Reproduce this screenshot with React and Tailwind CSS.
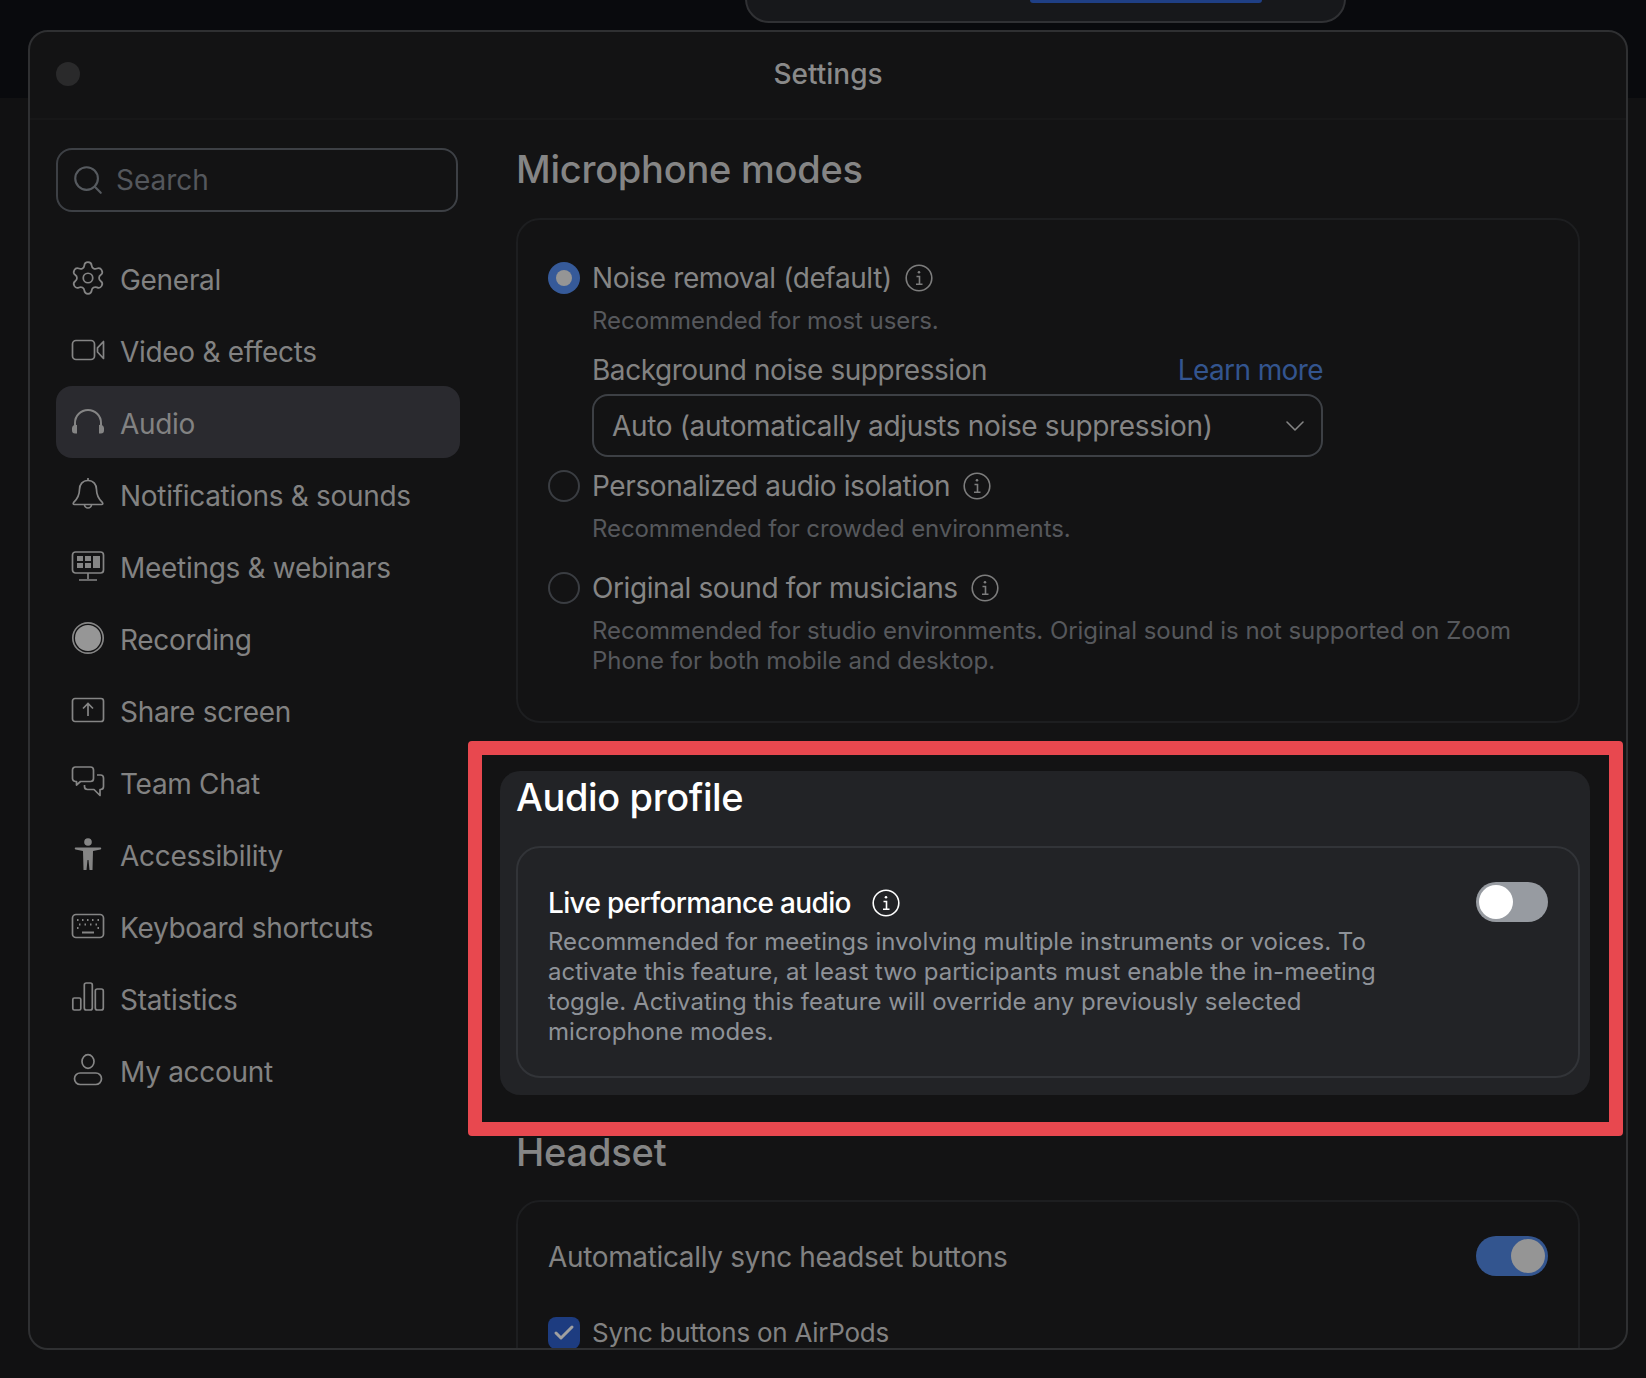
import { Check, ChevronDown, Search, Settings } from 'lucide-react'

const NAV_ICON = 'w-[34px] h-[34px] shrink-0 text-[#858585]'

const VideoIcon = () => (
  <svg viewBox="0 0 34 34" fill="none" stroke="currentColor" strokeWidth="1.7" className={NAV_ICON}>
    <rect x="1.5" y="7.5" width="22" height="19" rx="3.5" />
    <path d="M32.5 8.5v17l-6-6.5v-4.2z" strokeLinejoin="round" />
  </svg>
)

const HeadphonesIcon = () => (
  <svg viewBox="0 0 34 34" fill="none" stroke="currentColor" strokeWidth="2" className={NAV_ICON}>
    <path d="M4 23v-5a13 13 0 0 1 26 0v5" />
    <path d="M1 23a3.500 3.500 0 0 1 5-3v8.500H4a3 3 0 0 1-3-3zM33 23a3.500 3.500 0 0 0-5-3v8.500h2a3 3 0 0 0 3-3z" fill="currentColor" stroke="none" />
  </svg>
)

const BellIcon = () => (
  <svg viewBox="0 0 34 34" fill="none" stroke="currentColor" strokeWidth="1.7" className={NAV_ICON}>
    <path d="M17 3.500c-5.500 0-8.500 4-8.500 9 0 6-2.200 9.500-6 13.200-.6.700-.2 1.800.8 1.800h27.400c1 0 1.400-1.100.8-1.800-3.800-3.700-6-7.200-6-13.200 0-5-3-9-8.500-9z" strokeLinejoin="round" />
    <path d="M13.500 27.500a3.500 3.500 0 0 0 7 0M17 1v2.500" />
  </svg>
)

const MonitorIcon = () => (
  <svg viewBox="0 0 34 34" fill="none" stroke="currentColor" strokeWidth="1.7" className={NAV_ICON}>
    <rect x="1.500" y="3" width="31" height="21" rx="3" />
    <path d="M17 24v6M8 31h18" />
    <path d="M6 7h6v5H6zM14 7h6v5h-6zM6 14h6v5H6zM14 14h6v5h-6zM22 7h7v12h-7z" fill="currentColor" stroke="none" />
  </svg>
)

const RecordIcon = () => (
  <svg viewBox="0 0 34 34" fill="none" className={NAV_ICON}>
    <circle cx="17" cy="17" r="15.200" stroke="currentColor" strokeWidth="1.700" />
    <circle cx="17" cy="17" r="13" fill="#969696" />
  </svg>
)

const ShareIcon = () => (
  <svg viewBox="0 0 34 34" fill="none" stroke="currentColor" strokeWidth="1.700" className={NAV_ICON}>
    <rect x="1.500" y="5.500" width="31" height="23" rx="2.500" />
    <path d="M17 23v-12M12 15.500l5-5 5 5" />
  </svg>
)

const ChatIcon = () => (
  <svg viewBox="0 0 34 34" fill="none" stroke="currentColor" strokeWidth="1.700" strokeLinejoin="round" className={NAV_ICON}>
    <path d="M4.500 2h15a3 3 0 0 1 3 3v8.500a3 3 0 0 1-3 3H9.500l-4 3.500v-3.500h-1a3 3 0 0 1-3-3V5a3 3 0 0 1 3-3z" />
    <path d="M26 10h3.500a3 3 0 0 1 3 3v8.500a3 3 0 0 1-3 3H29v6l-6-6h-6.500a3 3 0 0 1-3-3V20" />
  </svg>
)

const AccessIcon = () => (
  <svg viewBox="0 0 34 34" fill="currentColor" className={NAV_ICON}>
    <circle cx="17" cy="5" r="3.800" />
    <path d="M4.500 10.500h25c.8 0 1.200 1.800 0 2l-7.500 1.500-.5 19h-3L17.500 23h-1l-1 10h-3L12 14l-7.500-1.500c-1.200-.3-.8-2 0-2z" />
  </svg>
)

const KeyboardIcon = () => (
  <svg viewBox="0 0 34 34" fill="none" stroke="currentColor" strokeWidth="1.700" className={NAV_ICON}>
    <rect x="1.500" y="5.500" width="31" height="23" rx="3.500" />
    <path d="M6 11h1.500M11 11h1.500M16 11h1.500M21 11h1.500M26.500 11H28M8 15.500h1.500M13.500 15.500H15M19 15.500h1.500M24.500 15.500H26M6 19h1.500M26.500 19H28" strokeWidth="2" />
    <path d="M11 23.500h12" strokeWidth="2" />
  </svg>
)

const StatsIcon = () => (
  <svg viewBox="0 0 34 34" fill="none" stroke="currentColor" strokeWidth="1.700" className={NAV_ICON}>
    <rect x="1.800" y="17" width="8" height="12" rx="1.500" />
    <rect x="13.300" y="2" width="8" height="27" rx="2" />
    <rect x="24.300" y="8" width="8" height="21" rx="2" />
  </svg>
)

const AccountIcon = () => (
  <svg viewBox="0 0 34 34" fill="none" stroke="currentColor" strokeWidth="1.700" className={NAV_ICON}>
    <ellipse cx="17" cy="8.500" rx="6" ry="6.800" />
    <rect x="3.500" y="20" width="27" height="11.500" rx="5.700" />
  </svg>
)

const GearIcon = () => <Settings strokeWidth={1.1} className="w-[38px] h-[38px] -m-[2px] shrink-0 text-[#858585]" />

const navItems = [
  { label: 'General', Icon: GearIcon },
  { label: 'Video & effects', Icon: VideoIcon },
  { label: 'Audio', Icon: HeadphonesIcon, active: true },
  { label: 'Notifications & sounds', Icon: BellIcon },
  { label: 'Meetings & webinars', Icon: MonitorIcon },
  { label: 'Recording', Icon: RecordIcon },
  { label: 'Share screen', Icon: ShareIcon },
  { label: 'Team Chat', Icon: ChatIcon },
  { label: 'Accessibility', Icon: AccessIcon },
  { label: 'Keyboard shortcuts', Icon: KeyboardIcon },
  { label: 'Statistics', Icon: StatsIcon },
  { label: 'My account', Icon: AccountIcon },
]

function InfoIcon({ className = '' }) {
  return (
    <svg viewBox="0 0 28 28" fill="none" stroke="currentColor" strokeWidth="1.600" className={`w-[28px] h-[28px] shrink-0 ${className}`}>
      <circle cx="14" cy="14" r="12.800" />
      <path d="M11.500 12.500H14.500V20M11 20.300h6.500" />
      <circle cx="14" cy="8.300" r="1.300" fill="currentColor" stroke="none" />
    </svg>
  )
}

function Radio({ checked }) {
  if (checked) {
    return (
      <span className="w-[32px] h-[32px] shrink-0 rounded-full bg-[#365a99] flex items-center justify-center">
        <span className="w-[16px] h-[16px] rounded-full bg-[#959595]" />
      </span>
    )
  }
  return <span className="w-[32px] h-[32px] shrink-0 rounded-full border-2 border-[#3a3d42]" />
}

function Toggle({ on }) {
  return (
    <span className={`w-[72px] h-[40px] rounded-full flex items-center px-[3px] shrink-0 ${on ? 'bg-[#33558f] justify-end' : 'bg-[#979ba1]'}`}>
      <span className={`w-[34px] h-[34px] rounded-full ${on ? 'bg-[#959595]' : 'bg-white'}`} />
    </span>
  )
}

function ModeLabel({ children }) {
  return (
    <div className="flex items-center gap-[13px] h-[32px]">
      <span className="text-[28px] leading-[32px] text-[#858585] tracking-[-0.4px]">{children}</span>
      <InfoIcon className="text-[#7d7d7d]" />
    </div>
  )
}

export default function App() {
  return (
    <div className="relative w-[1646px] h-[1378px] overflow-hidden bg-[#111112]" style={{ fontFamily: 'Inter, "Liberation Sans", sans-serif' }}>
      {/* desktop behind the window */}
      <div className="absolute inset-x-0 top-0 h-[98px] bg-[#090a0d]" />
      <div className="absolute left-[745px] top-[-30px] w-[601px] h-[53px] rounded-b-[24px] bg-[#17181b] border-2 border-[#303134]">
        <div className="absolute left-[283px] top-[28px] w-[232px] h-[3px] rounded-b bg-[#1f3f85]" />
      </div>

      {/* settings window */}
      <div className="absolute left-[28px] top-[30px] w-[1600px] h-[1320px] rounded-[20px] border-2 border-[#2f3032] bg-[#131314] flex flex-col overflow-hidden">
        <div className="relative h-[88px] shrink-0 border-b-2 border-[#171718] flex items-center justify-center">
          <span className="absolute left-[26px] top-[30px] w-[24px] h-[24px] rounded-full bg-[#2a2a2b]" />
          <span className="text-[28px] font-medium text-[#8a8a8a] -mt-[2px]">Settings</span>
        </div>

        <div className="flex flex-1 min-h-0">
          {/* sidebar */}
          <div className="w-[430px] shrink-0 pl-[26px] pt-[28px]">
            <div className="w-[402px] h-[64px] rounded-[16px] border-2 border-[#3d4045] flex items-center pl-[13px] gap-[11px]">
              <Search size={34} strokeWidth={1.5} className="text-[#565a5f]" />
              <span className="text-[28px] text-[#54575c]">Search</span>
            </div>
            <div className="mt-[30px] flex flex-col">
              {navItems.map(({ label, Icon, active }) => (
                <div key={label} className={`w-[404px] h-[72px] rounded-[16px] flex items-center pl-[15px] gap-[15px] ${active ? 'bg-[#2a2a2f]' : ''}`}>
                  <Icon />
                  <span className="pt-[4px] text-[28px] text-[#828282] tracking-[-0.3px] whitespace-nowrap">{label}</span>
                </div>
              ))}
            </div>
          </div>

          {/* content */}
          <div className="flex-1 min-w-0 pl-[56px] pr-[46px] pt-[26px]">
            <h2 className="text-[38px] leading-[46px] font-medium text-[#858585] tracking-[-0.25px]">Microphone modes</h2>

            <div className="mt-[26px] h-[505px] rounded-[24px] border-2 border-[#1d1e20] pl-[30px] pr-[60px] pt-[42px]">
              <div className="flex items-start gap-[12px]">
                <Radio checked />
                <div className="flex-1">
                  <ModeLabel>Noise removal (default)</ModeLabel>
                  <p className="mt-[12px] text-[24px] leading-[30px] text-[#56585c] tracking-[-0.05px]">Recommended for most users.</p>
                  <div className="mt-[17px] w-[731px] flex items-center justify-between h-[34px]">
                    <span className="text-[28px] text-[#828282] tracking-[-0.45px]">Background noise suppression</span>
                    <span className="text-[28px] text-[#33558f] tracking-[-0.6px]">Learn more</span>
                  </div>
                  <div className="mt-[7px] w-[731px] h-[63px] rounded-[16px] border-2 border-[#3d4045] flex items-center justify-between pl-[18px] pr-[10px]">
                    <span className="text-[28px] text-[#858585] tracking-[-0.35px]">Auto (automatically adjusts noise suppression)</span>
                    <ChevronDown size={32} strokeWidth={1.2} className="text-[#858585]" />
                  </div>
                </div>
              </div>

              <div className="mt-[13px] flex items-start gap-[12px]">
                <Radio />
                <div className="flex-1">
                  <ModeLabel>Personalized audio isolation</ModeLabel>
                  <p className="mt-[12px] text-[24px] leading-[30px] text-[#56585c] tracking-[-0.1px]">Recommended for crowded environments.</p>
                </div>
              </div>

              <div className="mt-[28px] flex items-start gap-[12px]">
                <Radio />
                <div className="flex-1">
                  <ModeLabel>Original sound for musicians</ModeLabel>
                  <p className="mt-[12px] text-[24px] leading-[30px] text-[#56585c] tracking-[-0.05px]">
                    Recommended for studio environments. Original sound is not supported on Zoom Phone for both mobile and desktop.
                  </p>
                </div>
              </div>
            </div>

            {/* highlighted section */}
            <div className="-ml-[16px] -mr-[10px] mt-[48px] h-[324px] rounded-[20px] bg-[#222326] pl-[16px] pr-[10px] pt-[3px]">
              <h2 className="text-[38px] leading-[46px] font-medium text-white tracking-[-0.4px]">Audio profile</h2>
              <div className="mt-[26px] h-[232px] rounded-[24px] border-2 border-[#323438] pl-[30px] pr-[30px] pt-[34px] flex justify-between items-start">
                <div className="w-[830px]">
                  <div className="flex items-center gap-[21px] h-[42px]">
                    <span className="text-[28px] font-medium text-white tracking-[-0.65px]">Live performance audio</span>
                    <InfoIcon className="text-white" />
                  </div>
                  <p className="mt-[3px] text-[24px] leading-[30px] text-[#8e9298] tracking-[0.02px]">
                    Recommended for meetings involving multiple instruments or voices. To activate this feature, at least two participants must enable the in-meeting toggle. Activating this feature will override any previously selected microphone modes.
                  </p>
                </div>
                <Toggle />
              </div>
            </div>

            <h2 className="mt-[34px] text-[38px] leading-[46px] font-medium text-[#858585] tracking-[-0.2px]">Headset</h2>
            <div className="mt-[25px] h-[220px] rounded-[24px] border-2 border-[#1d1e20] pl-[30px] pr-[30px] pt-[34px]">
              <div className="flex items-center justify-between h-[40px]">
                <span className="pt-[2px] text-[28px] text-[#828282] tracking-[-0.35px]">Automatically sync headset buttons</span>
                <Toggle on />
              </div>
              <div className="mt-[37px] flex items-center gap-[12px]">
                <span className="w-[32px] h-[32px] rounded-[8px] bg-[#1d3c80] flex items-center justify-center">
                  <Check size={24} strokeWidth={3} className="text-[#a0a0a0]" />
                </span>
                <span className="text-[26px] text-[#828282] tracking-[-0.25px]">Sync buttons on AirPods</span>
              </div>
            </div>
          </div>
        </div>
      </div>

      {/* red annotation box */}
      <div className="absolute left-[468px] top-[741px] w-[1155px] h-[395px] rounded-[4px] border-[14px] border-[#e8484f] pointer-events-none" />
    </div>
  )
}
